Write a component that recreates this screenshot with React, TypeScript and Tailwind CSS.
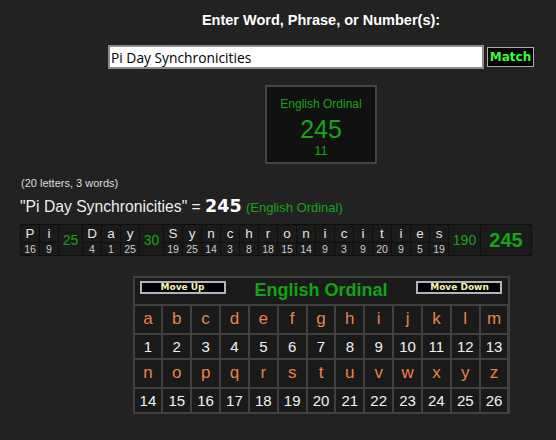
import React from "react";

type Word = { letters: [string, number][]; sum: number; w: string };

const words: Word[] = [
  { letters: [["P", 16], ["i", 9]], sum: 25, w: "w-[23px]" },
  { letters: [["D", 4], ["a", 1], ["y", 25]], sum: 30, w: "w-[23px]" },
  {
    letters: [
      ["S", 19], ["y", 25], ["n", 14], ["c", 3], ["h", 8], ["r", 18], ["o", 15], ["n", 14],
      ["i", 9], ["c", 3], ["i", 9], ["t", 20], ["i", 9], ["e", 5], ["s", 19],
    ],
    sum: 190,
    w: "w-[31px]",
  },
];

const alpha1 = "abcdefghijklm".split("");
const alpha2 = "nopqrstuvwxyz".split("");

function LetterRow({ letters }: { letters: string[] }) {
  return (
    <>
      {letters.map((l) => (
        <div key={l} className="h-[27px] bg-[#1a1a1a] flex items-center justify-center text-[17px] text-[#ee8048] leading-none pb-[2px]">
          {l}
        </div>
      ))}
    </>
  );
}

function NumberRow({ start }: { start: number }) {
  return (
    <>
      {Array.from({ length: 13 }, (_, i) => (
        <div key={i} className="h-[23px] bg-[#1a1a1a] flex items-center justify-center text-[15px] text-[#f2f2f2] leading-none">
          {start + i}
        </div>
      ))}
    </>
  );
}

export default function App() {
  return (
    <div className="w-[556px] h-[440px] bg-[#222222] overflow-hidden font-['Liberation_Sans',Arial,sans-serif]">
      <div className="pl-[86px] flex flex-col items-center">
        <div className="pt-[12px] text-[14.5px] leading-[17px] font-bold text-white">
          Enter Word, Phrase, or Number(s):
        </div>
        <div className="mt-[16px] flex items-center gap-[3px]">
          <input
            readOnly
            value="Pi Day Synchronicities"
            className="w-[376px] h-[24px] border-2 border-[#8c8c8c] bg-white px-[1px] text-[13.8px] text-black font-['Open_Sans',sans-serif] outline-none"
          />
          <button className="w-[47px] h-[20px] bg-black border border-[#aaaaaa] text-[#33ff33] font-bold text-[12px] leading-none font-['DejaVu_Sans',sans-serif]">
            Match
          </button>
        </div>
        <div className="mt-[16px] w-[112px] h-[79px] bg-[#111111] border-2 border-[#444444] flex flex-col items-center pt-[10px] text-[#15a515]">
          <div className="text-[12px] leading-[14px]">English Ordinal</div>
          <div className="mt-[4px] text-[25px] leading-[28px]">245</div>
          <div className="text-[13px] leading-[15px]">11</div>
        </div>
      </div>

      <div className="px-[20px]">
        <div className="mt-[13px] text-[11px] leading-[13px] text-[#dddddd] pl-[1px]">(20 letters, 3 words)</div>
        <div className="mt-[7px] text-[15.7px] leading-[18px] text-[#eeeeee] whitespace-nowrap">
          "Pi Day Synchronicities" ={" "}
          <span className="font-bold font-['DejaVu_Sans',sans-serif] text-[17.5px] text-white">245</span>{" "}
          <span className="text-[13px] text-[#15a515]">(English Ordinal)</span>
        </div>
        <div className="mt-[7px] inline-flex gap-px p-px bg-[#0f0f0f]">
          {words.map((word, wi) => (
            <React.Fragment key={wi}>
              {word.letters.map(([ch, n], li) => (
                <div key={li} className="w-[18px] flex flex-col gap-px">
                  <div className="h-[17px] bg-[#1b1b1b] flex items-center justify-center text-[13.5px] leading-none text-[#e4e4e4]">
                    {ch}
                  </div>
                  <div className="h-[12px] bg-[#1b1b1b] flex items-center justify-center text-[10.5px] leading-none text-[#cccccc]">
                    {n}
                  </div>
                </div>
              ))}
              <div className={`${word.w} bg-[#1b1b1b] flex items-center justify-center text-[14px] leading-none text-[#15a515]`}>
                {word.sum}
              </div>
            </React.Fragment>
          ))}
          <div className="w-[50px] bg-[#1b1b1b] flex items-center justify-center text-[20px] font-bold leading-none text-[#15a515]">
            245
          </div>
        </div>
      </div>

      <div className="pl-[86px] flex flex-col items-center">
        <div className="mt-[20px] w-[377px] border-2 border-[#404040] bg-[#404040]">
          <div className="h-[26px] bg-[#1a1a1a] flex items-start justify-between px-[5px]">
            <button className="mt-[3px] w-[86px] h-[13px] bg-[#00000a] border-2 border-[#b4b4b4] text-[#f8f4a8] font-bold text-[9px] leading-none font-['DejaVu_Sans',sans-serif] flex items-center justify-center">
              Move Up
            </button>
            <div className="mt-[2px] text-[18px] leading-[20px] font-bold text-[#11a511]">English Ordinal</div>
            <button className="mt-[3px] w-[86px] h-[13px] bg-[#00000a] border-2 border-[#b4b4b4] text-[#f8f4a8] font-bold text-[9px] leading-none font-['DejaVu_Sans',sans-serif] flex items-center justify-center">
              Move Down
            </button>
          </div>
          <div className="mt-[2px] grid grid-cols-[repeat(13,1fr)] gap-[2px]">
            <LetterRow letters={alpha1} />
            <NumberRow start={1} />
            <LetterRow letters={alpha2} />
            <NumberRow start={14} />
          </div>
        </div>
      </div>
    </div>
  );
}
